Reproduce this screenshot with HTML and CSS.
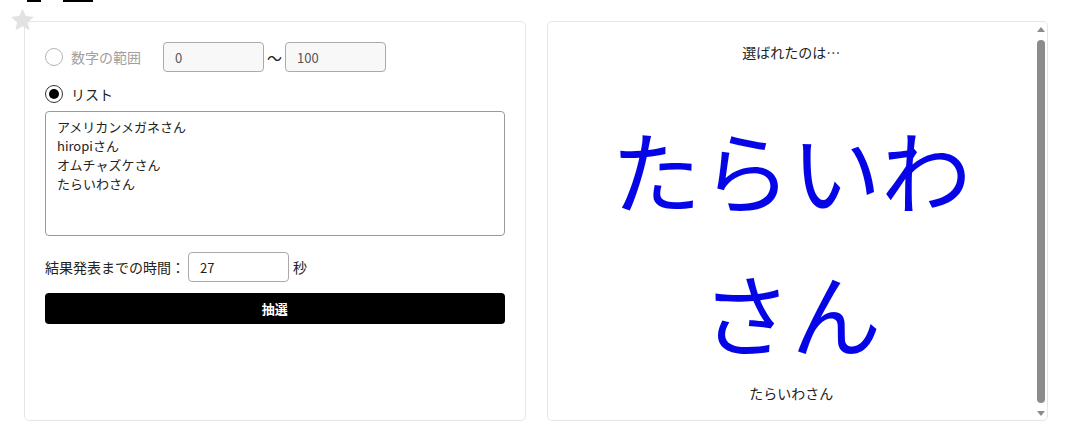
FILE: index.html
```html
<!DOCTYPE html>
<html lang="ja">
<head>
    <meta charset="UTF-8">
    <meta name="viewport" content="width=device-width, initial-scale=1.0">
    <title>抽選</title>
    <link rel="stylesheet" href="styles.css">
</head>
<body>
    <!-- ページ上端（スクロールで見出しの下線だけ見えている） -->
    <div class="top-edge">
        <span class="edge-line short"></span>
        <span class="edge-line long"></span>
    </div>

    <div class="panels">
        <!-- 設定パネル -->
        <div class="card settings">
            <svg class="fav-star" viewBox="0 0 24 24" width="27" height="26">
                <path d="M12 1.5l3.1 6.9 7.4.8-5.6 5 1.6 7.3L12 17.8l-6.5 3.7 1.6-7.3-5.6-5 7.4-.8z" fill="#e2e2e2"/>
            </svg>

            <div class="row">
                <label class="choice disabled">
                    <input type="radio" name="mode" disabled>
                    <span>数字の範囲</span>
                </label>
                <div class="range">
                    <input type="text" class="field" value="0" disabled>
                    <span class="tilde">〜</span>
                    <input type="text" class="field" value="100" disabled>
                </div>
            </div>

            <label class="choice">
                <input type="radio" name="mode" checked>
                <span>リスト</span>
            </label>

            <textarea class="names">アメリカンメガネさん
hiropiさん
オムチャズケさん
たらいわさん</textarea>

            <div class="row timer">
                <span>結果発表までの時間：</span>
                <input type="text" class="field" value="27">
                <span>秒</span>
            </div>

            <button class="draw-btn">抽選</button>
        </div>

        <!-- 結果パネル -->
        <div class="card result">
            <div class="result-body">
                <p class="result-caption">選ばれたのは…</p>
                <p class="winner">たらいわさん</p>
                <p class="winner-small">たらいわさん</p>
            </div>
            <div class="scrollbar">
                <span class="arrow up"></span>
                <span class="thumb"></span>
                <span class="arrow down"></span>
            </div>
        </div>
    </div>
</body>
</html>
```

FILE: styles.css
```css
/* 基本 */
body {
    margin: 0;
    padding: 0 25px 0 24px;
    background: #fff;
    font-family: 'Noto Sans CJK JP', 'Noto Sans', sans-serif;
    color: #222;
    font-size: 14px;
}

/* 上端の下線 */
.top-edge {
    display: flex;
    gap: 22px;
    height: 2px;
    padding-left: 3px;
}

.edge-line {
    background: #000;
}

.edge-line.short {
    width: 14px;
}

.edge-line.long {
    width: 30px;
}

/* パネル */
.panels {
    display: grid;
    grid-template-columns: 1fr 1fr;
    gap: 21px;
    margin-top: 19px;
}

.card {
    position: relative;
    height: 400px;
    box-sizing: border-box;
    border: 1px solid #e6e6e6;
    border-radius: 5px;
    background: #fff;
}

.fav-star {
    position: absolute;
    left: -16px;
    top: -15px;
}

/* 設定 */
.settings {
    padding: 20px;
    display: flex;
    flex-direction: column;
}

.row {
    display: flex;
    align-items: center;
}

.choice {
    display: flex;
    align-items: center;
    gap: 8px;
    height: 30px;
}

/* ラジオボタン */
.choice input {
    appearance: none;
    width: 18px;
    height: 18px;
    margin: 0;
    box-sizing: border-box;
    border: 1.5px solid #333;
    border-radius: 50%;
    background: #fff;
    display: grid;
    place-items: center;
}

.choice input:checked::after {
    content: "";
    width: 10px;
    height: 10px;
    border-radius: 50%;
    background: #000;
}

.choice input:disabled {
    border: 1px solid #b5b5b5;
}

.choice.disabled {
    color: #a0a0a0;
    width: 118px;
}

.row + .choice {
    margin-top: 7px;
}

.range {
    display: flex;
    align-items: center;
}

.tilde {
    width: 21px;
    text-align: center;
    font-size: 15px;
}

.field {
    width: 101px;
    height: 30px;
    box-sizing: border-box;
    border: 1px solid #aaa;
    border-radius: 4px;
    padding: 0 11px;
    font-family: inherit;
    font-size: 13px;
    color: #222;
    background: #fff;
}

.field:disabled {
    background: #f8f8f8;
    color: #555;
}

.names {
    margin-top: 2px;
    height: 125px;
    box-sizing: border-box;
    border: 1px solid #9a9a9a;
    border-radius: 4px;
    padding: 5px 11px;
    font-family: inherit;
    font-size: 13px;
    line-height: 19px;
    color: #222;
    resize: none;
}

.timer {
    margin-top: 16px;
    gap: 3px;
}

.timer .field {
    margin-right: 1px;
}

.draw-btn {
    margin-top: 11px;
    height: 31px;
    border: none;
    border-radius: 4px;
    background: #000;
    color: #fff;
    font-family: inherit;
    font-size: 13px;
    font-weight: bold;
    cursor: pointer;
}

/* 結果 */
.result {
    display: flex;
    overflow: hidden;
}

.result-body {
    flex: 1;
    padding: 20px 0 0 1px;
    text-align: center;
}

.result-body p {
    margin: 0;
}

.result-caption {
    font-size: 14px;
    line-height: 20px;
}

.winner {
    margin-top: 35px !important;
    font-size: 90px;
    line-height: 143px;
    color: #0505e8;
    padding: 0 30px;
}

.winner-small {
    font-size: 14px;
    line-height: 20px;
}

/* スクロールバー */
.scrollbar {
    width: 13px;
    display: flex;
    flex-direction: column;
    align-items: center;
    padding: 5px 0 4px;
}

.arrow {
    width: 0;
    height: 0;
    border-left: 4px solid transparent;
    border-right: 4px solid transparent;
}

.arrow.up {
    border-bottom: 5px solid #8c8c8c;
}

.arrow.down {
    border-top: 5px solid #8c8c8c;
}

.thumb {
    flex: 1;
    width: 8px;
    margin: 8px 0;
    border-radius: 4px;
    background: #8c8c8c;
}
```
